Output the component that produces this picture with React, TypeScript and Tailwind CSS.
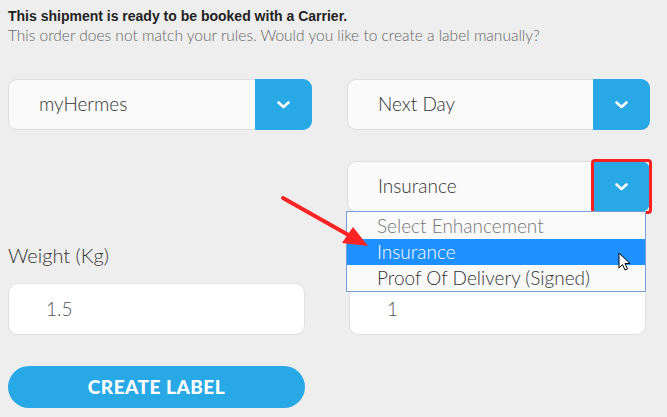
import React from 'react'

const futura = { fontFamily: 'Lato, "Open Sans", sans-serif' }

function Chevron() {
  return (
    <svg width="13" height="8" viewBox="0 0 13 8" fill="none">
      <polyline points="1.5,1.5 6.5,6 11.5,1.5" stroke="white" strokeWidth="2.6" strokeLinecap="round" strokeLinejoin="round" />
    </svg>
  )
}

function SelectBox({ value, highlight, children }: { value: string; highlight?: boolean; children?: React.ReactNode }) {
  return (
    <div className="relative flex h-[51px]">
      <div className="flex flex-1 items-center rounded-l-[9px] border border-r-0 border-[#dedede] bg-[#fafafa] pl-[30px] text-[19px] font-light text-[#333]">
        {value}
      </div>
      <div className="relative flex w-[57px] items-center justify-center rounded-r-[9px] bg-[#29a8e6]">
        <Chevron />
        {highlight && (
          <div className="absolute -top-[2px] -bottom-[2px] -left-[2px] -right-[2px] rounded-[4px] border-[3px] border-[#ff2020]" />
        )}
      </div>
      {children}
    </div>
  )
}

export default function App() {
  return (
    <div className="relative h-[417px] w-[667px] overflow-hidden bg-[#eeeeee]" style={futura}>
      <div className="px-2 pt-[8px]">
        <p className="text-[14px] font-bold leading-[17px] text-[#222]" style={{ fontFamily: '"Liberation Sans", Arial, sans-serif' }}>
          This shipment is ready to be booked with a Carrier.
        </p>
        <p className="text-[15.5px] font-light leading-[20px] text-[#666]">
          This order does not match your rules. Would you like to create a label manually?
        </p>
      </div>

      <div className="mt-[34px] grid grid-cols-[304px_303px] gap-x-[35px] pl-2">
        <SelectBox value="myHermes" />
        <SelectBox value="Next Day" />

        <div className="mt-[31px]" />
        <div className="relative z-10 mt-[31px]">
          <SelectBox value="Insurance" highlight>
            <div className="absolute left-[-1px] top-[50px] w-[300px] border border-[#7a9cd9] bg-[#fafafa] text-[19px] font-light">
              <div className="h-[27px] pl-[30px] leading-[27px] text-[#777]">Select Enhancement</div>
              <div className="h-[26px] bg-[#1e90ff] pl-[30px] leading-[26px] text-white">Insurance</div>
              <div className="h-[26px] pl-[30px] leading-[25px] text-[#333]">Proof Of Delivery (Signed)</div>
            </div>
          </SelectBox>
        </div>

        <div className="mt-[31px] text-[20px] font-light leading-[24px] text-[#333]">Weight (Kg)</div>
        <div className="mt-[31px] h-[24px]" />

        <div className="mt-[16px] flex h-[52px] w-[297px] items-center rounded-[10px] border border-[#e0e0e0] bg-white pl-[37px] text-[19px] font-light text-[#555]">
          1.5
        </div>
        <div className="ml-[2px] mt-[16px] flex h-[52px] w-[297px] items-center rounded-[10px] border border-[#e0e0e0] bg-white pl-[37px] text-[19px] font-light text-[#555]">
          1
        </div>

        <button className="mt-[31px] h-[42px] w-[297px] rounded-full bg-[#29a8e6] text-[19px] font-black uppercase tracking-[0.5px] text-white">
          Create Label
        </button>
      </div>

      <svg className="pointer-events-none absolute left-0 top-0 z-20" width="667" height="417">
        <line x1="283" y1="198" x2="352" y2="237" stroke="#ff2323" strokeWidth="4" strokeLinecap="round" />
        <polygon points="368,246 342,243 353,227" fill="#ff2323" />
        <path
          d="M619 253 L619 268 L622.5 264.5 L625 270 L627.5 269 L625 263.5 L630 263.5 Z"
          fill="white"
          stroke="black"
          strokeWidth="1"
          strokeLinejoin="round"
        />
      </svg>
    </div>
  )
}
